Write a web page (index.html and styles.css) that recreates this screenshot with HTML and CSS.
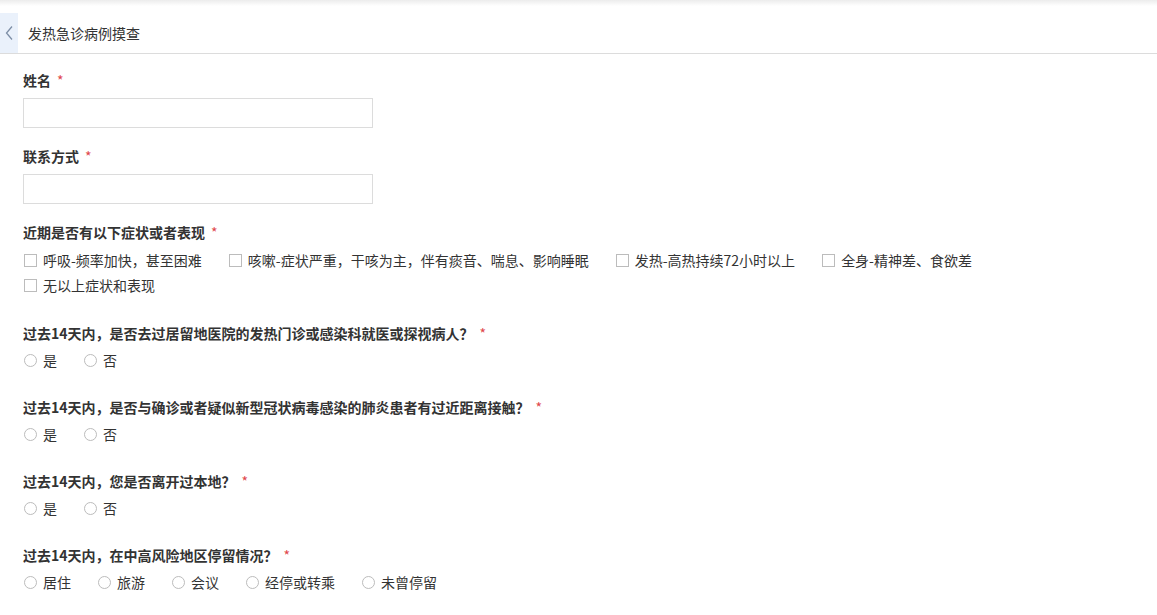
FILE: index.html
```html
<!DOCTYPE html>
<html lang="zh-CN">
<head>
    <meta charset="UTF-8">
    <title>发热急诊病例摸查</title>
    <link rel="stylesheet" href="styles.css">
</head>
<body>
<div class="topbar"></div>
<div class="header">
    <a class="back" href="#">
        <svg width="10" height="16" viewBox="0 0 10 16"><path d="M8 1.5 L2.5 8 L8 14.5" fill="none" stroke="#7d8ea6" stroke-width="1.3"/></svg>
    </a>
    <span class="title">发热急诊病例摸查</span>
</div>
<div class="form">
    <div class="field">
        <div class="label">姓名<i>*</i></div>
        <input class="text" type="text">
    </div>
    <div class="field">
        <div class="label">联系方式<i>*</i></div>
        <input class="text" type="text">
    </div>
    <div class="field choose multi">
        <div class="label">近期是否有以下症状或者表现<i>*</i></div>
        <div class="options">
            <label class="opt"><span class="box"></span>呼吸-频率加快，甚至困难</label>
            <label class="opt"><span class="box"></span>咳嗽-症状严重，干咳为主，伴有痰音、喘息、影响睡眠</label>
            <label class="opt"><span class="box"></span>发热-高热持续72小时以上</label>
            <label class="opt"><span class="box"></span>全身-精神差、食欲差</label>
            <label class="opt"><span class="box"></span>无以上症状和表现</label>
        </div>
    </div>
    <div class="field choose">
        <div class="label">过去14天内，是否去过居留地医院的发热门诊或感染科就医或探视病人？<i>*</i></div>
        <div class="options">
            <label class="opt"><span class="dot"></span>是</label>
            <label class="opt"><span class="dot"></span>否</label>
        </div>
    </div>
    <div class="field choose">
        <div class="label">过去14天内，是否与确诊或者疑似新型冠状病毒感染的肺炎患者有过近距离接触？<i>*</i></div>
        <div class="options">
            <label class="opt"><span class="dot"></span>是</label>
            <label class="opt"><span class="dot"></span>否</label>
        </div>
    </div>
    <div class="field choose">
        <div class="label">过去14天内，您是否离开过本地？<i>*</i></div>
        <div class="options">
            <label class="opt"><span class="dot"></span>是</label>
            <label class="opt"><span class="dot"></span>否</label>
        </div>
    </div>
    <div class="field choose">
        <div class="label">过去14天内，在中高风险地区停留情况？<i>*</i></div>
        <div class="options">
            <label class="opt"><span class="dot"></span>居住</label>
            <label class="opt"><span class="dot"></span>旅游</label>
            <label class="opt"><span class="dot"></span>会议</label>
            <label class="opt"><span class="dot"></span>经停或转乘</label>
            <label class="opt"><span class="dot"></span>未曾停留</label>
        </div>
    </div>
</div>
</body>
</html>
```

FILE: styles.css
```css
body{
    margin: 0;
    background: #fff;
    color: #333;
    font-family: "Noto Sans CJK SC", "Microsoft YaHei", sans-serif;
    font-size: 14px;
}
.topbar{
    height: 13px;
    background: linear-gradient(#ececec, #fff 6px);
}
.header{
    height: 40px;
    display: flex;
    align-items: center;
    border-bottom: 1px solid #dcdcdc;
}
.header .back{
    width: 18px;
    height: 40px;
    background: #eaf1fb;
    display: flex;
    align-items: center;
    justify-content: center;
}
.header .title{
    margin-left: 10px;
    font-size: 14px;
    color: #333;
}
.form{
    padding: 16px 23px 0;
}
.field{
    margin-bottom: 18px;
}
.field.choose{
    margin-bottom: 24px;
}
.field.multi{
    margin-bottom: 25px;
}
.label{
    line-height: 20px;
    font-weight: bold;
    margin-bottom: 8px;
}
.choose .label{
    margin-bottom: 5px;
}
.multi .label{
    margin-bottom: 6px;
}
.label i{
    font-style: normal;
    font-weight: normal;
    color: #e0474b;
    margin-left: 6px;
}
.text{
    display: block;
    width: 350px;
    height: 30px;
    box-sizing: border-box;
    border: 1px solid #dcdcdc;
    margin: 0;
    padding: 0 8px;
    outline: none;
}
.options{
    display: flex;
    flex-wrap: wrap;
}
.opt{
    display: flex;
    align-items: center;
    line-height: 25px;
    margin-right: 26px;
}
.opt .box{
    width: 11px;
    height: 11px;
    border: 1px solid #bcbcbc;
    margin: 0 6px 0 1px;
}
.opt .dot{
    width: 11px;
    height: 11px;
    border: 1px solid #bcbcbc;
    border-radius: 50%;
    margin: 0 6px 0 1px;
}
```
